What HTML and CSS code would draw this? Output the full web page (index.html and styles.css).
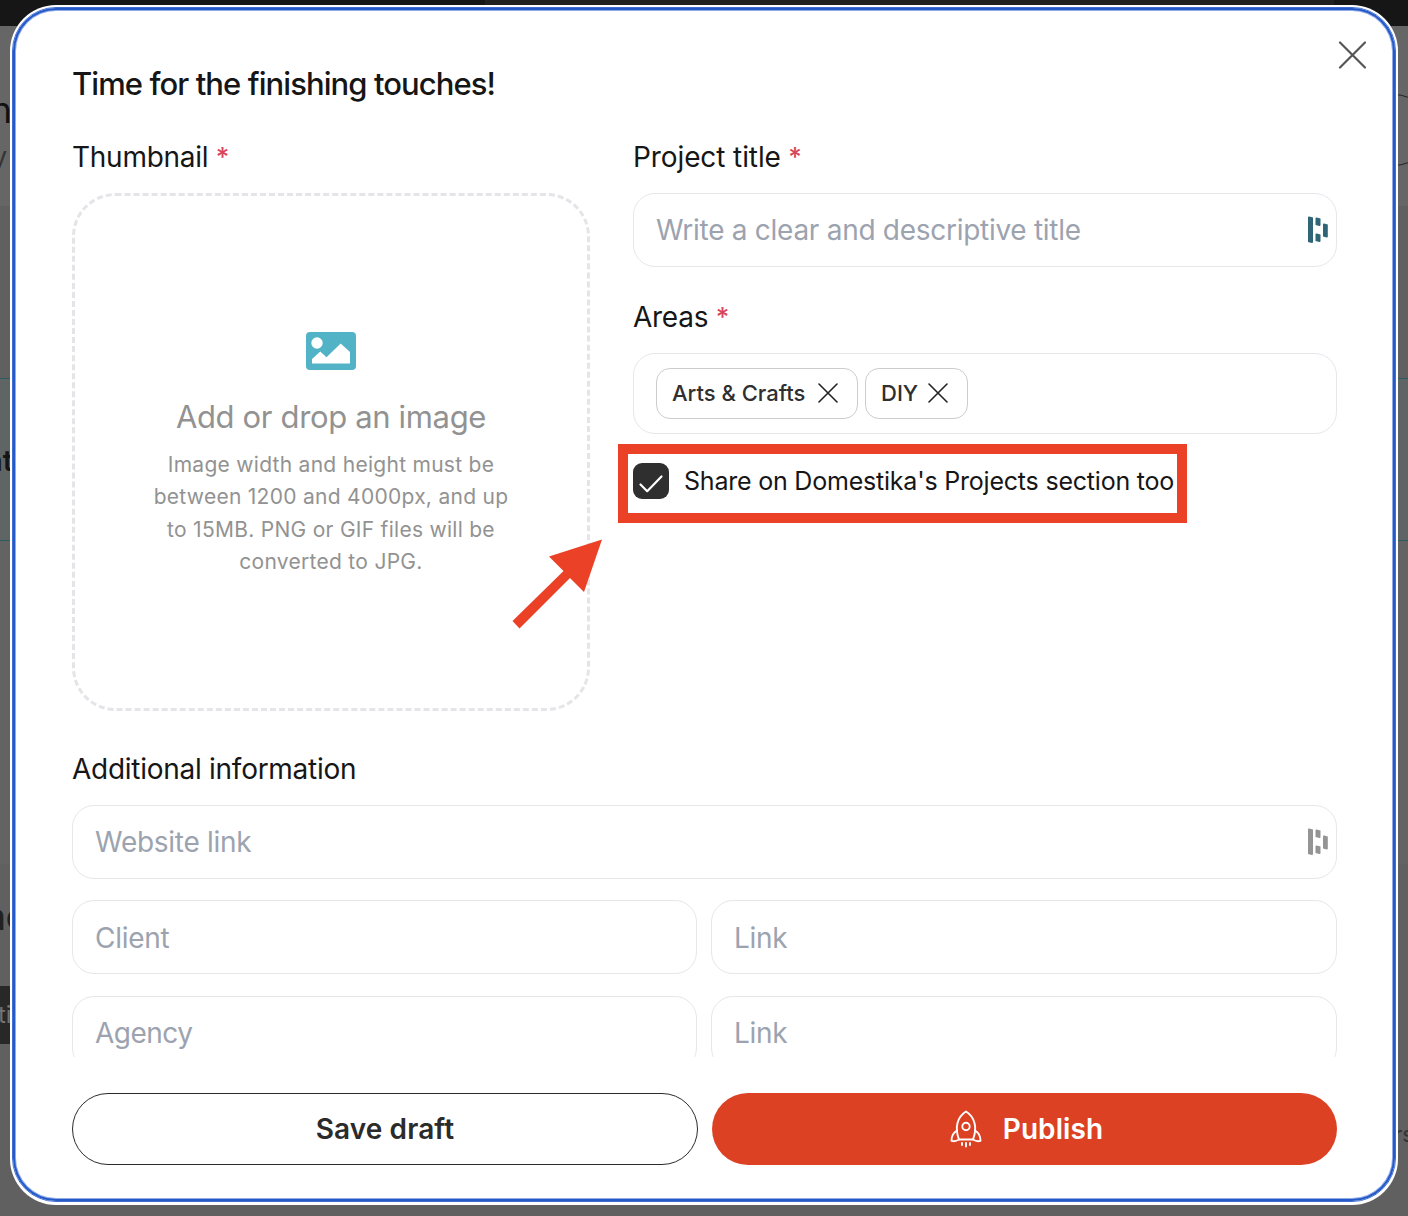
FILE: index.html
```html
<!DOCTYPE html>
<html lang="en">
<head>
<meta charset="utf-8">
<title>Publish project</title>
<link rel="stylesheet" href="styles.css">
</head>
<body>
<div class="page">
  <div class="topbar"><span class="topbar-tab"></span></div>
  <div class="band band-head"><span class="pg-title">n</span><span class="pg-sub">y</span><span class="pg-pill"></span></div>
  <div class="band band-gap"></div>
  <div class="band band-teal"><span class="pg-bold">nt</span></div>
  <div class="band band-mid"></div>
  <div class="band band-low"><span class="pg-bold pg-low">ac</span><span class="pg-btn">ti</span><span class="pg-right">rs</span></div>
</div>

<div class="modal" role="dialog">
  <button class="close" aria-label="Close">
    <svg width="28" height="28" viewBox="0 0 28 28"><path d="M2 1.500l25 25M27 1.500l-25 25" stroke="#555" stroke-width="2.200" stroke-linecap="round"/></svg>
  </button>
  <div class="scroll">
    <h1 class="title"><span>Time for the finishing touches!</span></h1>
    <div class="columns">
      <section class="thumb-col">
        <div class="label"><span class="t-thumb">Thumbnail</span> <span class="star">*</span></div>
        <div class="drop">
          <svg class="drop-line" width="518" height="518"><rect x="1.500" y="1.500" width="515" height="515" rx="42" fill="none" stroke="#e5e5e9" stroke-width="3" stroke-dasharray="6 3.030"/></svg>
          <svg width="50" height="38" viewBox="0 0 50 38"><rect width="50" height="38" rx="4" fill="#52b3c6"/><circle cx="11" cy="11" r="5.700" fill="#fff"/><path d="M6 31.500v-4.500l8.300-7.500 6.200 5.700L34.700 11.500 44 20v11.500z" fill="#fff"/></svg>
          <div class="drop-title"><span>Add or drop an image</span></div>
          <div class="drop-help"><span>Image width and height must be</span><br><span>between 1200 and 4000px, and up</span><br><span>to 15MB. PNG or GIF files will be</span><br><span>converted to JPG.</span></div>
        </div>
      </section>
      <section class="info-col">
        <div class="label"><span class="t-proj">Project title</span> <span class="star">*</span></div>
        <div class="field"><span>Write a clear and descriptive title</span>
          <svg class="mark" width="20" height="28" viewBox="0 0 20 28" fill="#2f6577"><path d="M0 1.500Q0 .3 1.200.5L5 1.500V26q0 1.200-1.200 1L0 26zM7.500 2.500q0-1.200 1.200-1L12.500 2.500V9q0 1.200-1.200 1L7.500 9zM7.500 18.500q0-1.200 1.200-1L12.500 18.500V25q0 1.200-1.200 1L7.500 25zM15 8.500q0-1.200 1.200-1L19.800 8.500V20.500q0 1.200-1.200 1L15 20.500z"/></svg>
        </div>
        <div class="label label-areas"><span class="t-areas">Areas</span> <span class="star">*</span></div>
        <div class="tags">
          <span class="tag tag-arts"><span class="t-arts">Arts &amp; Crafts</span><svg width="20" height="20" viewBox="0 0 20 20"><path d="M1 1l18 18M19 1L1 19" stroke="#222" stroke-width="1.600" stroke-linecap="round"/></svg></span>
          <span class="tag tag-diy"><span class="t-diy">DIY</span><svg width="20" height="20" viewBox="0 0 20 20"><path d="M1 1l18 18M19 1L1 19" stroke="#222" stroke-width="1.600" stroke-linecap="round"/></svg></span>
        </div>
        <div class="share">
          <svg width="36" height="36" viewBox="0 0 36 36"><rect width="36" height="36" rx="9" fill="#2f2f2f"/><path d="M7.500 21.500l6.700 6.700L28.500 13.500" fill="none" stroke="#fff" stroke-width="2.200" stroke-linecap="round" stroke-linejoin="round"/></svg>
          <span class="t-share">Share on Domestika's Projects section too</span>
          <span class="highlight"></span>
        </div>
      </section>
    </div>
    <div class="label label-more"><span>Additional information</span></div>
    <div class="field"><span>Website link</span>
      <svg class="mark" width="20" height="28" viewBox="0 0 20 28" fill="#949494"><path d="M0 1.500Q0 .3 1.200.5L5 1.500V26q0 1.200-1.200 1L0 26zM7.500 2.500q0-1.200 1.200-1L12.500 2.500V9q0 1.200-1.200 1L7.500 9zM7.500 18.500q0-1.200 1.200-1L12.500 18.500V25q0 1.200-1.200 1L7.500 25zM15 8.500q0-1.200 1.200-1L19.800 8.500V20.500q0 1.200-1.200 1L15 20.500z"/></svg>
    </div>
    <div class="pairs">
      <div class="field field-low"><span class="t-client">Client</span></div>
      <div class="field field-low"><span>Link</span></div>
      <div class="field"><span class="t-agency">Agency</span></div>
      <div class="field"><span>Link</span></div>
    </div>
  </div>
  <div class="actions">
    <button class="btn btn-draft"><span>Save draft</span></button>
    <button class="btn btn-publish">
      <svg width="32" height="38" viewBox="0 0 32 38" fill="none" stroke="#fff" stroke-width="1.900" stroke-linecap="round" stroke-linejoin="round"><path d="M9 29.500C4.500 18 7 7 16 1.500c9 5.500 11.500 16.500 7 28z"/><circle cx="16" cy="16.500" r="3.700"/><path d="M7 20.500c-3.500 2-5.500 5-5.500 10.300 2.500.8 5 .3 7.500-1.300M25 20.500c3.500 2 5.500 5 5.500 10.300-2.500.8-5 .3-7.500-1.300M12 33v2M16 33v3.500M20 33v2"/></svg>
      <span>Publish</span>
    </button>
  </div>
  <svg class="arrow" width="92" height="90" viewBox="0 0 92 90"><path d="M91 .5L73 53 59 39 8.500 89.500 1.500 82 52.500 32 38 17.500z" fill="#ea4127"/></svg>
</div>
</body>
</html>
```
FILE: styles.css
```css
* { box-sizing: border-box; }
body { margin: 0; width: 1408px; height: 1216px; overflow: hidden; position: relative; font-family: Inter, "Liberation Sans", sans-serif; color: #161616; }
button { font: inherit; padding: 0; border: 0; background: none; }
svg { display: block; flex: none; }
span { white-space: nowrap; }

/* dimmed page underneath the dialog */
.page { height: 1216px; background: #636363; display: flex; flex-direction: column; }
.topbar { height: 26px; background: #161616; }
.topbar-tab { display: block; width: 1334px; height: 26px; background: linear-gradient(90deg, #161616 485px, #202020 485px); }
.band { position: relative; overflow: hidden; flex: none; }
.band-head { height: 180px; background: #666; }
.band-gap { height: 172px; background: #606060; }
.band-teal { height: 163px; background: #5e6564; border: solid #2c5b62; border-width: 1px 0; }
.band-mid { height: 323px; background: #636363; }
.band-low { height: 352px; background: #606060; }
.pg-title, .pg-sub, .pg-bold, .pg-btn, .pg-right, .pg-pill { position: absolute; }
.pg-title { right: 1396px; top: 62px; font-size: 36px; font-weight: 400; line-height: 44px; color: #111; }
.pg-sub { right: 1401px; top: 115px; font-size: 26px; line-height: 32px; color: #333; }
.pg-pill { left: 1330px; top: 68px; width: 100px; height: 72px; border: 1px solid #222; border-radius: 36px; }
.pg-bold { right: 1395px; top: 64px; font-size: 29px; font-weight: 600; line-height: 36px; color: #151515; }
.pg-low { right: auto; left: -16px; top: 30px; font-size: 38px; line-height: 44px; color: #222; }
.pg-btn { left: 0; top: 122px; width: 60px; height: 58px; background: #282828; color: #737373; font-size: 24px; line-height: 58px; text-indent: -2px; }
.pg-right { left: 1394px; top: 254px; font-size: 22px; line-height: 32px; color: #333; }

.modal { position: absolute; left: 10px; top: 5px; width: 1388px; height: 1200px; background: #fff; border-radius: 46px; padding: 59px 61px 0 62px; }
/* focus ring with softened edges */
.modal::before { content: ""; position: absolute; inset: 2px 2px 3px 2px; border: 1px solid #426fd1; border-radius: 44px; box-shadow: inset 0 0 0 2px #2459c8, inset 0 0 0 3px #8fabe8; pointer-events: none; }
.close { position: absolute; left: 1328px; top: 36px; width: 28px; height: 28px; }
.scroll { height: 993px; overflow: hidden; }
.title { margin: 0 0 35px; font-size: 31px; font-weight: 500; line-height: 40px; height: 40px; letter-spacing: -.92px; }
.columns { display: grid; grid-template-columns: 518px 704px; gap: 43px; }
.label { height: 36px; line-height: 36px; font-size: 28px; margin-bottom: 18px; display: flex; gap: 9px; letter-spacing: -.27px; }
.t-proj { letter-spacing: -.1px; }
.star { color: #d9455a; font-size: 26px; font-weight: 500; margin-left: -1.5px; }
.drop { position: relative; height: 518px; display: flex; flex-direction: column; align-items: center; padding-top: 139px; text-align: center; color: #929292; }
.drop-line { position: absolute; left: 0; top: 0; }
.drop-title { margin-top: 27px; height: 40px; line-height: 40px; font-size: 31px; letter-spacing: -.35px; }
.drop-help { margin-top: 12px; font-size: 21px; line-height: 32.3px; letter-spacing: .28px; }
.field { height: 74px; border: 1px solid #e5e7eb; border-radius: 22px; padding: 0 8px 0 22px; display: flex; align-items: center; justify-content: space-between; font-size: 28px; letter-spacing: -.28px; color: #9ca3af; }
.field-low { padding-top: 2px; }
.t-agency { letter-spacing: -.5px; }
.label-areas { margin-top: 32px; }
.tags { height: 81px; border: 1px solid #e5e7eb; border-radius: 22px; padding: 14px 22px; display: flex; gap: 7px; }
.tag { height: 51px; border: 1px solid #ccc; border-radius: 14px; display: flex; align-items: center; justify-content: space-between; padding: 0 19px 1px 15px; font-size: 22px; font-weight: 500; color: #2f2f2f; }
.tag-arts { width: 202px; }
.tag-diy { width: 103px; }
.share { position: relative; margin-top: 29px; height: 36px; display: flex; align-items: center; gap: 15px; font-size: 25px; letter-spacing: -.21px; }
.highlight { position: absolute; left: -15px; top: -19px; width: 569px; height: 79px; border: 10px solid #ea4127; }
.label-more { margin-top: 40px; }
.pairs { display: grid; grid-template-columns: 625px 626px; column-gap: 14px; row-gap: 22px; margin-top: 21px; }
.actions { margin-top: 36px; display: grid; grid-template-columns: 626px 625px; gap: 14px; }
.btn { height: 72px; border-radius: 36px; display: flex; align-items: center; justify-content: center; font-size: 28px; font-weight: 600; letter-spacing: .1px; }
.btn-draft { border: 1px solid #2b2b2b; color: #2b2b2b; }
.btn-publish { background: #dd4124; color: #fff; gap: 21px; padding-left: 4px; }
.arrow { position: absolute; left: 501px; top: 534px; }
```
